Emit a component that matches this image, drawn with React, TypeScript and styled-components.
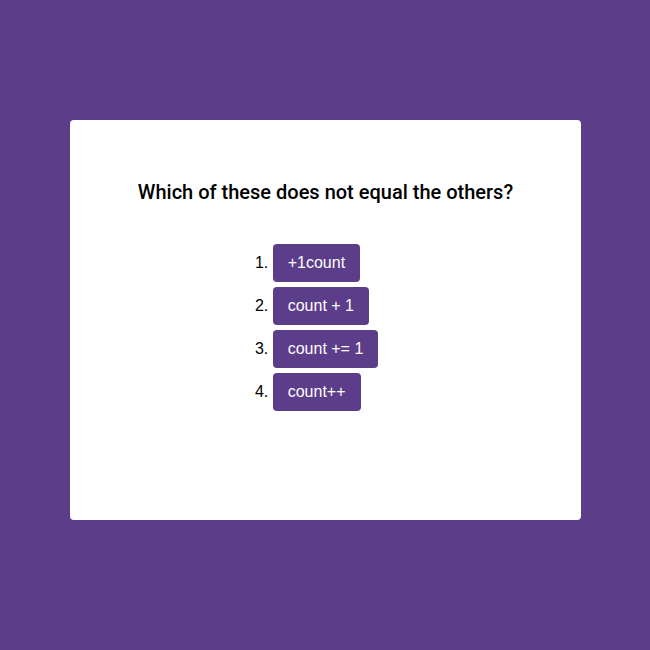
import React from "react";
import styled, { createGlobalStyle } from "styled-components";

const Global = createGlobalStyle`
  html, body {
    margin: 0;
    padding: 0;
    background: #5c3d8a;
    width: 650px;
    height: 650px;
    overflow: hidden;
  }
`;

const Page = styled.div`
  width: 650px;
  height: 650px;
  padding-top: 120px;
  padding-left: 1px;
  box-sizing: border-box;
  display: flex;
  justify-content: center;
`;

const Card = styled.div`
  width: 511px;
  height: 400px;
  background: #ffffff;
  border-radius: 4px;
  box-sizing: border-box;
  padding-top: 58px;
  display: flex;
  flex-direction: column;
  align-items: center;
`;

const Title = styled.h1`
  margin: 0;
  font-family: Roboto, "Liberation Sans", sans-serif;
  font-weight: 500;
  font-size: 20px;
  line-height: 28px;
  color: #000;
  text-align: center;
`;

const Options = styled.ol`
  margin: 38px 0 0;
  padding: 0;
  display: inline-block;
  font-family: "Liberation Sans", Arial, sans-serif;
  font-size: 16px;
  color: #000;
`;

const Item = styled.li`
  margin-bottom: 5px;
`;

const Choice = styled.button`
  display: inline-block;
  border: none;
  border-radius: 4px;
  background: #5c3d8a;
  color: #fff;
  font-family: "Liberation Sans", Arial, sans-serif;
  font-size: 16px;
  line-height: 18px;
  padding: 10px 15px;
  margin: 0;
  cursor: pointer;
`;

const options = ["+1count", "count + 1", "count += 1", "count++"];

export default function App() {
  return (
    <>
      <Global />
      <Page>
        <Card>
          <Title>Which of these does not equal the others?</Title>
          <Options>
            {options.map((o) => (
              <Item key={o}>
                <Choice>{o}</Choice>
              </Item>
            ))}
          </Options>
        </Card>
      </Page>
    </>
  );
}
